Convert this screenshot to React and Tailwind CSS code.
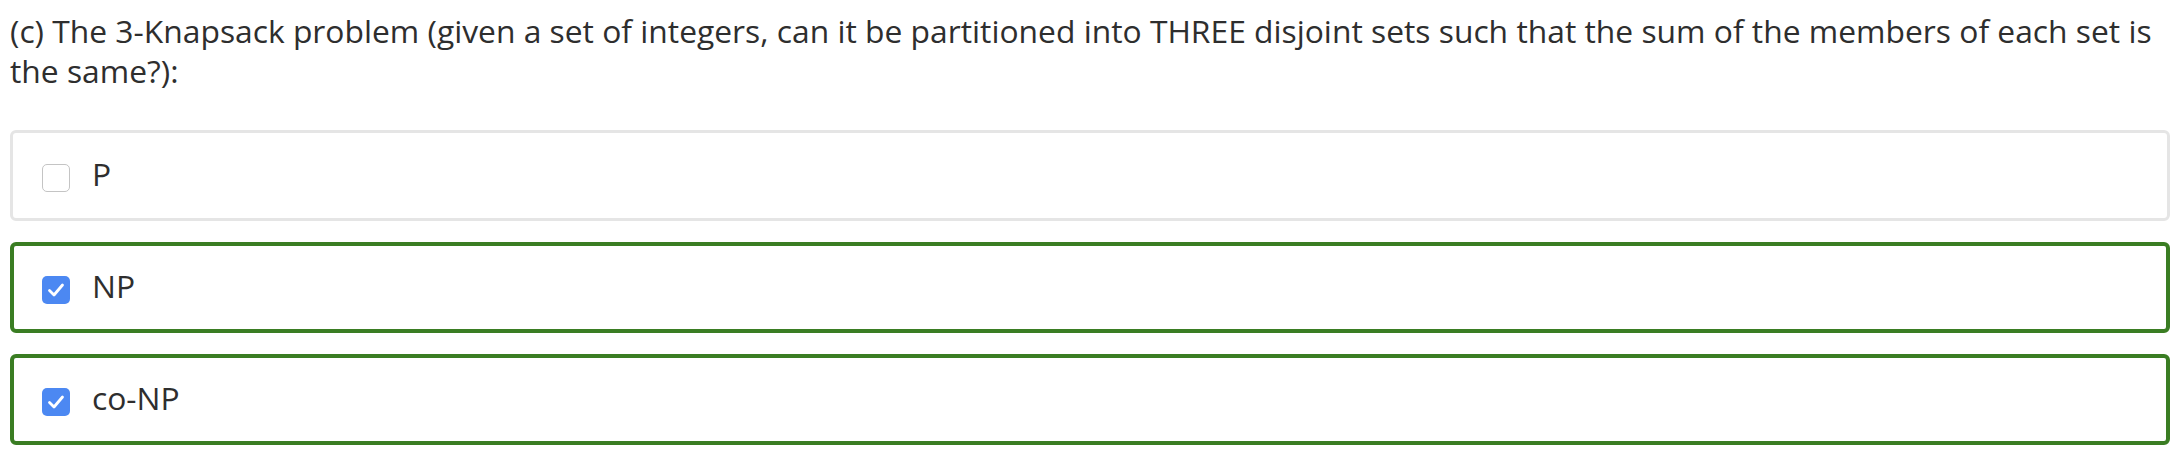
import React from "react";

function Option({ label, checked }) {
  return (
    <label
      className={
        "flex items-center h-[91px] rounded-[6px] pt-[5px] " +
        (checked ? "border-[4px] pl-[28px] border-[#3a7d23]" : "border-[3px] pl-[29px] border-[#e5e5e5]")
      }
    >
      {checked ? (
        <span className="block w-[28px] h-[28px] rounded-[5px] bg-[#4c88f2]">
          <svg width="28" height="28" viewBox="0 0 28 28" fill="none">
            <path d="M7.5 14.5l4.5 4.5 8.5-10" stroke="white" strokeWidth="2.8" strokeLinecap="round" strokeLinejoin="round" />
          </svg>
        </span>
      ) : (
        <span className="w-[28px] h-[28px] rounded-[5px] border-[1.5px] border-[#c4c4c4] bg-white" />
      )}
      <span className="ml-[22px] text-[31.8px] leading-[40px] text-[#2e2e2e] -mt-[8px]">{label}</span>
    </label>
  );
}

export default function App() {
  const options = [
    { label: "P", checked: false },
    { label: "NP", checked: true },
    { label: "co-NP", checked: true },
  ];

  return (
    <div className="bg-white w-[2182px] h-[456px] pl-[10px] pr-[12px] pt-[11px]" style={{ fontFamily: '"Open Sans", sans-serif' }}>
      <p className="text-[31.8px] leading-[40px] text-[#2e2e2e]">
        (c) The 3-Knapsack problem (given a set of integers, can it be partitioned into THREE disjoint sets such that the sum of the members of each set is the same?):
      </p>
      <div className="mt-[39px] flex flex-col gap-[21px]">
        {options.map((o) => (
          <Option key={o.label} label={o.label} checked={o.checked} />
        ))}
      </div>
    </div>
  );
}
